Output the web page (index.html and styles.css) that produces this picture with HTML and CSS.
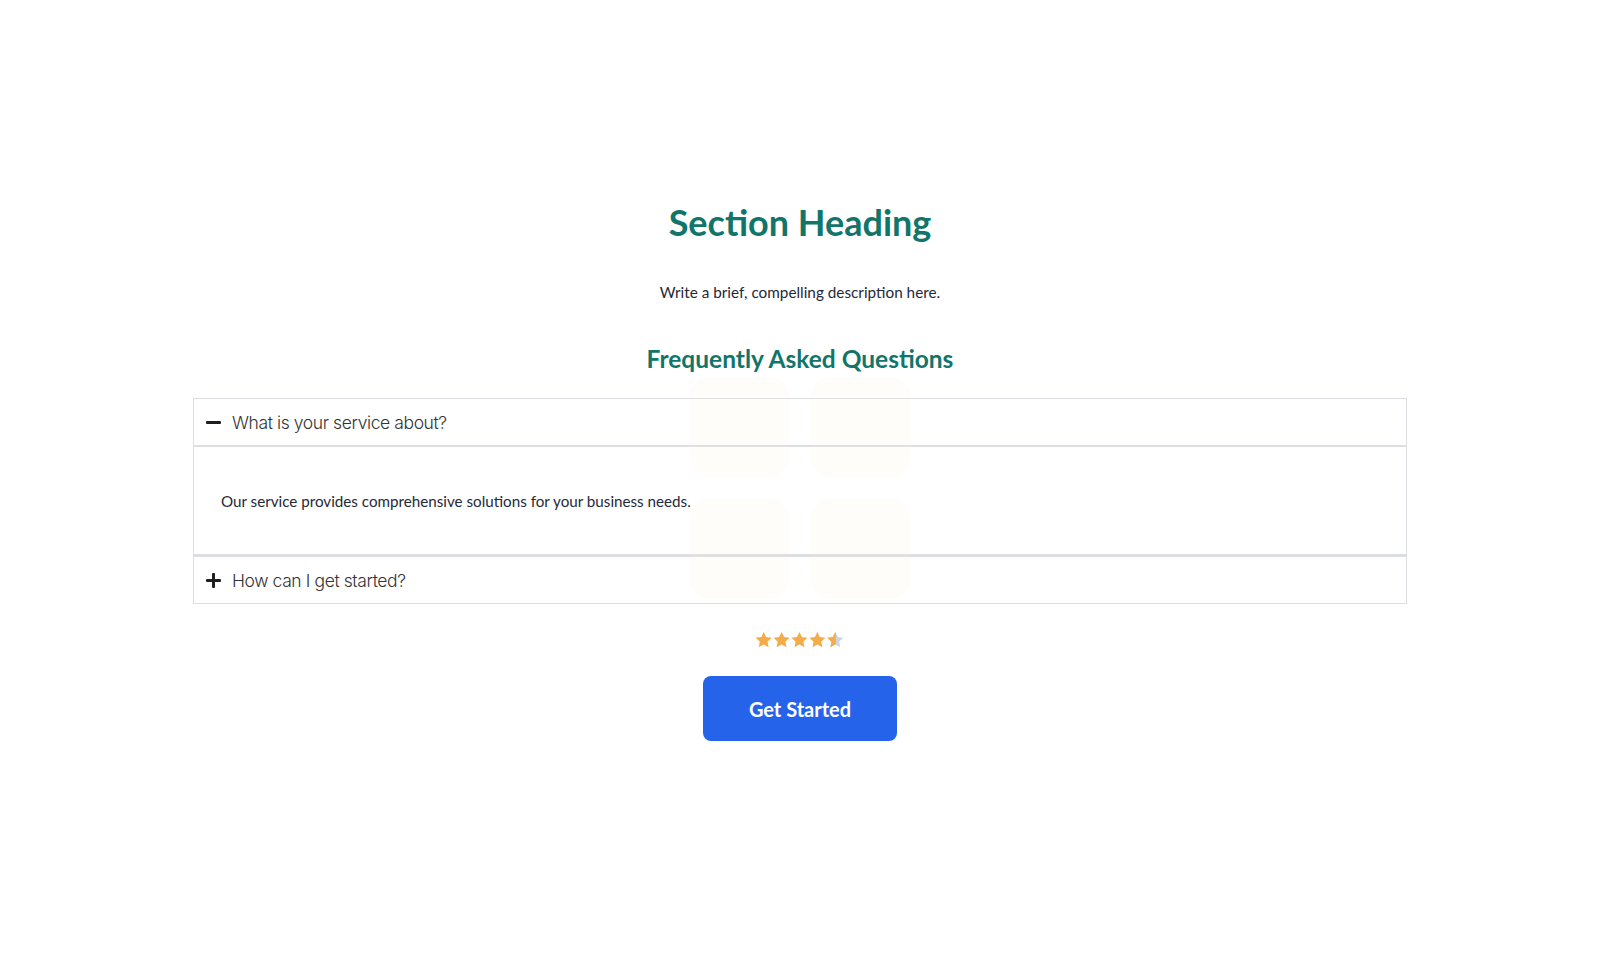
FILE: index.html
```html
<!DOCTYPE html>
<html lang="en">
<head>
<meta charset="utf-8">
<title>Section</title>
<link rel="stylesheet" href="styles.css">
</head>
<body>
<section class="section">
  <h1 class="title">Section Heading</h1>
  <p class="lead">Write a brief, compelling description here.</p>
  <h2 class="faq-title">Frequently Asked Questions</h2>
  <div class="faq">
    <div class="deco" aria-hidden="true">
      <span></span><span></span><span></span><span></span>
    </div>
    <div class="item open">
      <div class="q"><span class="ico minus"></span>What is your service about?</div>
      <div class="a">Our service provides comprehensive solutions for your business needs.</div>
    </div>
    <div class="item">
      <div class="q"><span class="ico plus"></span>How can I get started?</div>
    </div>
  </div>
  <div class="stars" aria-label="4.5 stars">
    <svg width="90" height="18" viewBox="0 0 88 17">
      <defs>
        <path id="st" d="M8.5 0.6l2.4 5 5.4 0.7-4 3.8 1 5.4-4.8-2.6-4.8 2.6 1-5.4-4-3.8 5.4-0.7z"/>
        <clipPath id="half"><rect x="0" y="0" width="9" height="17"/></clipPath>
      </defs>
      <use href="#st" x="0" fill="#f2ad4a"/>
      <use href="#st" x="17.5" fill="#f2ad4a"/>
      <use href="#st" x="35" fill="#f2ad4a"/>
      <use href="#st" x="52.5" fill="#f2ad4a"/>
      <use href="#st" x="70" fill="#cbd6e0"/>
      <use href="#st" x="70" fill="#f2ad4a" clip-path="url(#half)"/>
    </svg>
  </div>
  <a class="btn" href="#">Get Started</a>
</section>
</body>
</html>
```
FILE: styles.css
```css
* { box-sizing: border-box; }
html, body { margin: 0; background: #fff; }
body { font-family: "Lato", "Noto Sans", sans-serif; color: #1f2937; }

.section {
  display: flex;
  flex-direction: column;
  align-items: center;
  padding-top: 198px;
}
.title {
  margin: 0;
  font-size: 36px;
  line-height: 48px;
  font-weight: 700;
  color: #11756a;
}
.lead {
  margin: 34px 0 0;
  font-size: 15.3px;
  line-height: 24px;
  color: #1f2937;
}
.faq-title {
  margin: 39px 0 0;
  font-size: 24.5px;
  line-height: 32px;
  font-weight: 700;
  color: #11756a;
}
.faq {
  position: relative;
  width: 1214px;
  margin-top: 23px;
}
.item { border: 1px solid #dcdee2; background: #fff; }
.q {
  display: flex;
  align-items: center;
  gap: 11px;
  height: 46px;
  padding-left: 12px;
  font-family: "Inter", sans-serif;
  font-weight: 300;
  font-size: 17.5px;
  color: #333;
  letter-spacing: -0.4px;
}
.open .q { height: 48px; border-bottom: 2px solid #dcdee2; }
.ico { position: relative; width: 15px; height: 15px; flex: none; }
.ico::before, .ico::after {
  content: ""; position: absolute; background: #1f1f1f; border-radius: 1px;
}
.ico::before { left: 0; right: 0; top: 6px; height: 3px; }
.plus::after { top: 0; bottom: 0; left: 6px; width: 3px; }
.a {
  height: 107px;
  display: flex;
  align-items: center;
  padding-left: 27px;
  font-size: 15.2px;
  color: #1f2937;
}
.item.open { border-bottom-width: 2px; }
.deco {
  position: absolute;
  left: 496px;
  top: -21px;
  display: grid;
  grid-template-columns: 100px 100px;
  grid-auto-rows: 100px;
  gap: 22px;
  z-index: 2;
  pointer-events: none;
}
.deco span { background: #f3eccb; opacity: 0.12; border-radius: 20px; }
.stars { margin-top: 27px; height: 18px; line-height: 0; }
.btn {
  margin-top: 27px;
  display: flex;
  align-items: center;
  justify-content: center;
  width: 194px;
  height: 65px;
  background: #2563eb;
  border-radius: 8px;
  color: #fff;
  text-decoration: none;
  font-weight: 700;
  font-size: 20px;
}
```
